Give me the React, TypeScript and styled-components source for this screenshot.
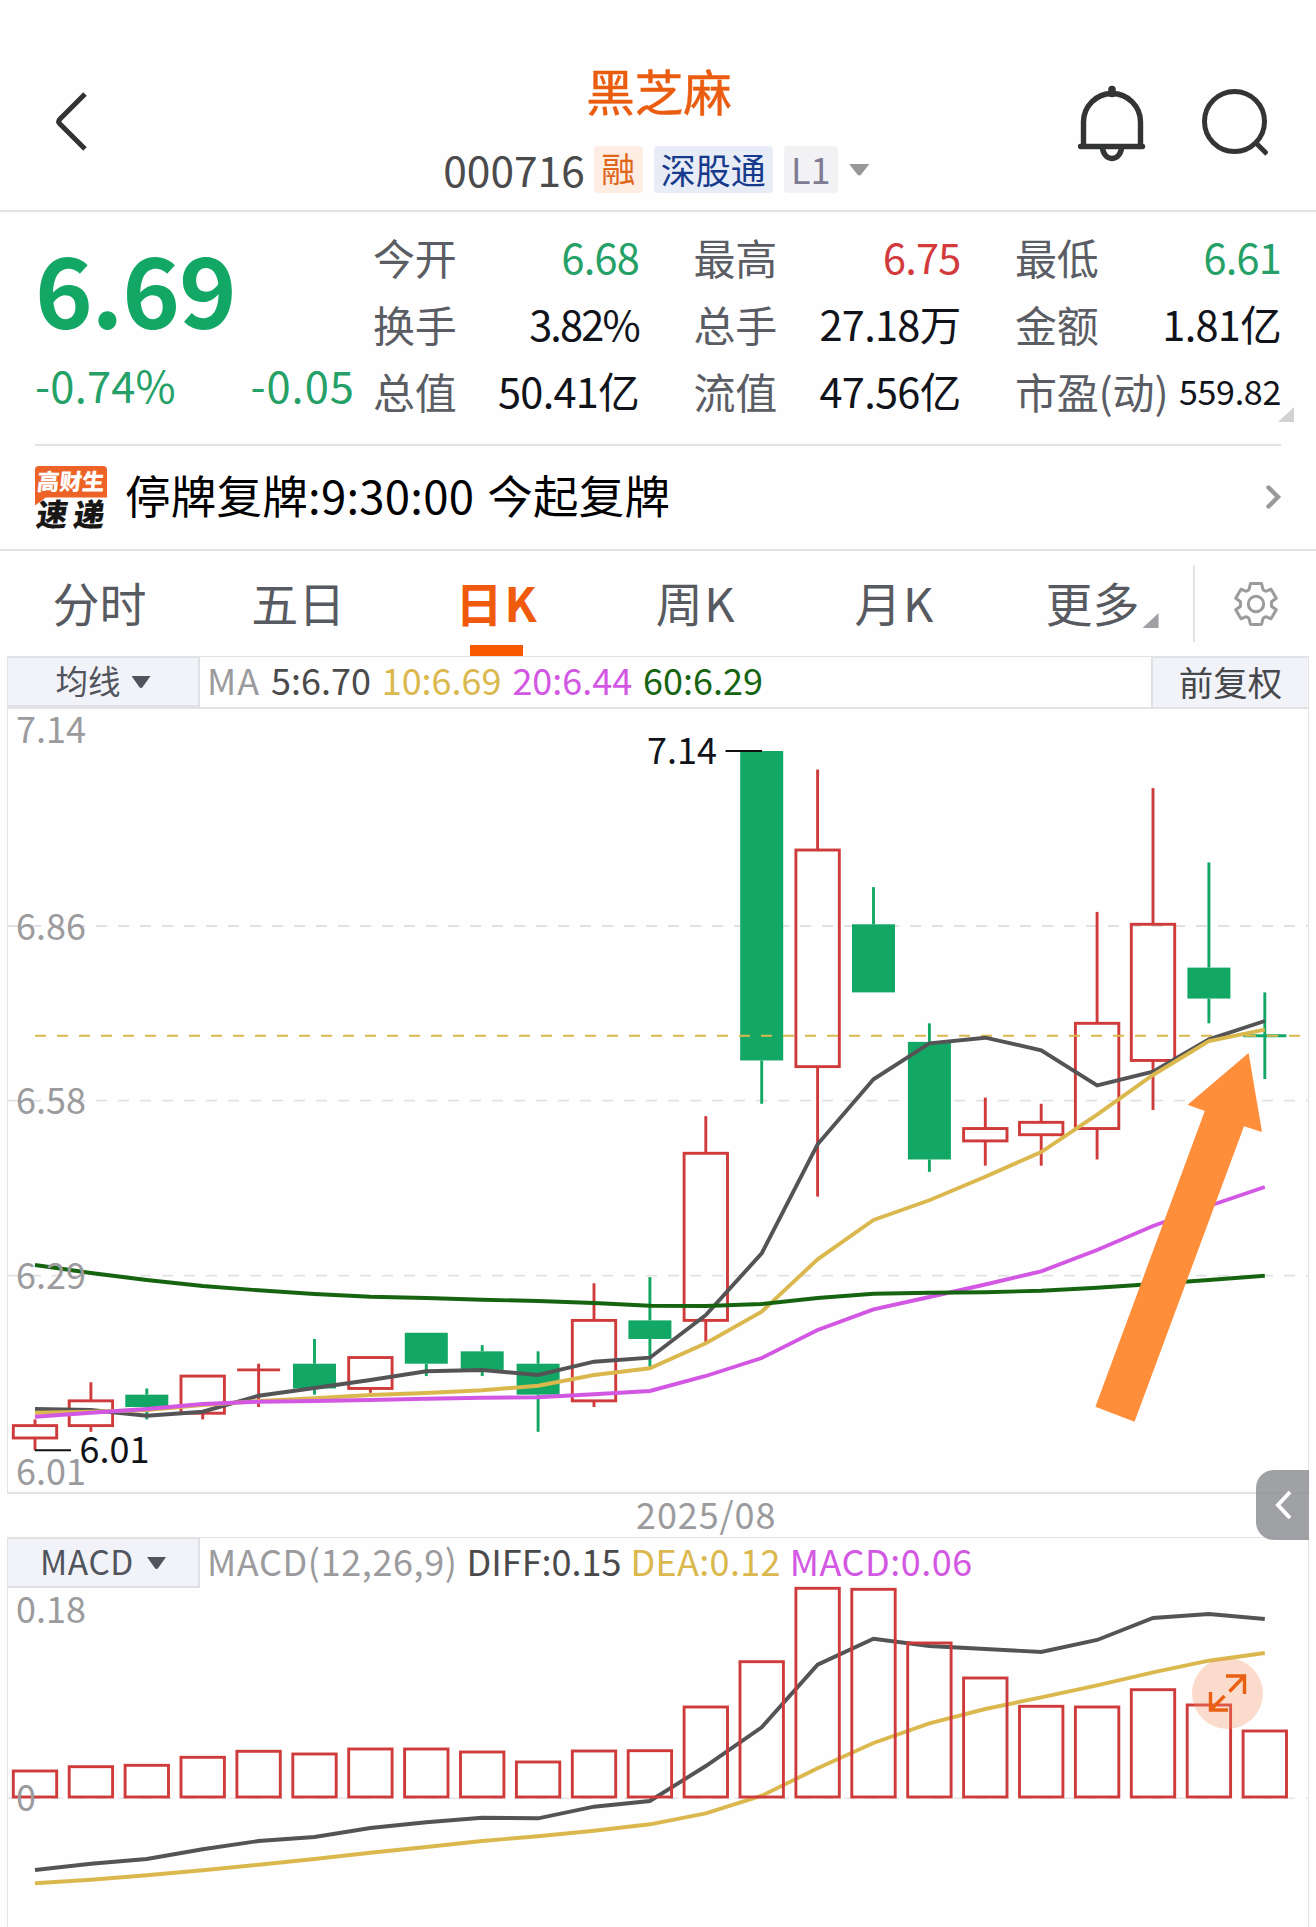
import React from "react";
import styled, { createGlobalStyle } from "styled-components";

const UP = "#cf3a3a";
const DOWN = "#12a765";
const GOLD = "#dbb84e";
const DARK = "#545456";
const PINK = "#d257e2";
const FOREST = "#166410";
const LINE = "#e3e3e5";
const MUTED = "#9b9b9d";
const LABEL = "#5b5d64";

const Global = createGlobalStyle`
  * { box-sizing: border-box; }
  body { margin: 0; background: #fefefe; }
  svg { display: block; }
`;

const Screen = styled.main`
  width: 1316px;
  height: 1927px;
  overflow: hidden;
  background: #fefefe;
  color: #111318;
  font-family: "Noto Sans CJK SC", "Noto Sans", sans-serif;
  font-size: 42px;
  white-space: nowrap;
`;

const Txt = styled.span<{ $size?: number; $color?: string; $track?: number }>`
  font-size: ${(p) => p.$size ?? 42}px;
  color: ${(p) => p.$color ?? "#10131a"};
  letter-spacing: ${(p) => p.$track ?? 0}px;
  line-height: 1;
`;

const Header = styled.header`
  height: 212px;
  border-bottom: 2px solid ${LINE};
  display: grid;
  grid-template-columns: 1fr auto 1fr;
  padding: 60px 48px 0 52px;
`;

const BackButton = styled.div`
  padding-top: 29px;
`;

const TitleBlock = styled.div`
  display: flex;
  flex-direction: column;
  align-items: center;
  padding-right: 7px;
`;

const Title = styled.h1`
  margin: 0 0 26px 5px;
  font-size: 48.5px;
  line-height: 60px;
  font-weight: 400;
  -webkit-text-stroke: 0.5px #ea5d10;
  color: #ea5d10;
`;

const CodeRow = styled.div`
  display: flex;
  align-items: center;
  height: 47px;
`;

const Tag = styled.span<{ $w: number; $bg: string; $fg: string; $size: number; $gap: number }>`
  width: ${(p) => p.$w}px;
  height: 47px;
  margin-left: ${(p) => p.$gap}px;
  padding-bottom: 3px;
  border-radius: 4px;
  display: flex;
  align-items: center;
  justify-content: center;
  background: ${(p) => p.$bg};
  color: ${(p) => p.$fg};
  font-size: ${(p) => p.$size}px;
  line-height: 1;
`;

const Actions = styled.div`
  display: flex;
  justify-content: flex-end;
  gap: 56px;
  padding-top: 24px;
`;

const Caret = styled.i<{ $w: number; $h: number; $color: string; $gap: number }>`
  width: ${(p) => p.$w}px;
  height: ${(p) => p.$h}px;
  margin-left: ${(p) => p.$gap}px;
  background: ${(p) => p.$color};
  clip-path: polygon(0 0, 100% 0, 57% 95%, 50% 100%, 43% 95%);
`;

const Corner = styled.i<{ $color: string }>`
  width: 16px;
  height: 15px;
  background: ${(p) => p.$color};
  clip-path: polygon(100% 0, 100% 100%, 0 100%);
`;

const Quote = styled.section`
  height: 234px;
  margin: 0 35px;
  border-bottom: 2px solid ${LINE};
  display: flex;
  position: relative;
`;

const PriceBlock = styled.div`
  width: 338px;
  padding: 24px 18px 0 0;
`;

const Price = styled.div`
  font-size: 98px;
  line-height: 100px;
  font-weight: 700;
  letter-spacing: -1.2px;
  color: ${DOWN};
`;

const ChangeRow = styled.div`
  display: flex;
  justify-content: space-between;
  margin-top: 27px;
  line-height: 50px;
`;

const StatGrid = styled.div`
  display: grid;
  grid-template-columns: 266px 267px 266px;
  column-gap: 54.5px;
  grid-template-rows: repeat(3, 67px);
  padding-top: 11px;
`;

const Stat = styled.div`
  display: flex;
  align-items: center;
  justify-content: space-between;
`;

const MoreStats = styled.div`
  position: absolute;
  right: -13px;
  bottom: 22px;
  line-height: 0;
  display: flex;
`;

const News = styled.section`
  height: 105px;
  border-bottom: 2px solid ${LINE};
  padding: 0 34px 0 35px;
  display: flex;
  align-items: center;

  > svg { margin-bottom: 2px; }
`;

const NewsText = styled.div`
  flex: 1;
  margin-left: 18px;
  padding-bottom: 8px;
  font-size: 45.5px;
  line-height: 50px;
  letter-spacing: 0.25px;
  word-spacing: 2.5px;
  color: #000;
`;

const Logo = styled.div`
  width: 72px;
  height: 64px;
  font-weight: 900;
`;

const LogoTop = styled.div`
  height: 40px;
  background: #ec6227;
  border-radius: 4px 4px 0 0;
  clip-path: polygon(0 0, 100% 0, 100% 80%, 15% 80%, 0 100%);
  color: #fff;
  font-size: 22.5px;
  line-height: 29px;
  text-align: center;

  span { display: block; transform: skewX(-6deg); }
`;

const LogoBottom = styled.div`
  margin-top: -9px;
  padding-left: 2px;
  color: #191716;
  font-size: 31px;
  letter-spacing: 6px;
  line-height: 32px;
  transform: skewX(-8deg);
`;

const Tabs = styled.nav`
  height: 105px;
  display: flex;
  align-items: center;
`;

const TabList = styled.div`
  width: 1193px;
  height: 105px;
  display: grid;
  grid-template-columns: repeat(6, 1fr);
`;

const Tab = styled.div<{ $active?: boolean; $track?: number }>`
  height: 105px;
  padding-top: 21px;
  display: flex;
  flex-direction: column;
  align-items: center;
  justify-content: space-between;
  font-size: 47px;
  line-height: 60px;
  letter-spacing: ${(p) => p.$track ?? 0}px;
  font-weight: ${(p) => (p.$active ? 700 : 400)};
  color: ${(p) => (p.$active ? "#f05a0c" : "#585a61")};
`;

const TabLine = styled.i`
  width: 53px;
  height: 11px;
  margin-right: 1px;
  background: #fb5900;
`;

const TabMore = styled.div`
  display: flex;
  align-items: flex-end;
  gap: 3px;
  margin-right: -17px;

  i { margin-bottom: 4px; }
`;

const Settings = styled.div`
  height: 77px;
  border-left: 2px solid ${LINE};
  padding: 15px 0 0 38px;
`;

const IndicatorBar = styled.div<{ $lined?: boolean }>`
  height: ${(p) => (p.$lined ? 53 : 51)}px;
  margin: 0 7px;
  display: flex;
  border: solid ${LINE};
  border-width: ${(p) => (p.$lined ? "1px 1px 2px 1px" : "1px 1px 0 1px")};
`;

const Picker = styled.div<{ $w: number; $side?: "left" | "right" }>`
  width: ${(p) => p.$w}px;
  flex: none;
  padding-bottom: 3px;
  display: flex;
  align-items: center;
  justify-content: center;
  background: #f2f3f8;
  border: solid #dfe0e3;
  border-width: ${(p) => (p.$side === "right" ? "1px 0 0 2px" : "1px 2px 2px 0")};

  i { margin-top: 4px; }
`;

const Legend = styled.div<{ $gap: number }>`
  flex: 1;
  padding: 0 0 7px 7px;
  display: flex;
  align-items: center;
  gap: ${(p) => p.$gap}px;
`;

const ChartFrame = styled.div<{ $h: number; $bottom?: boolean }>`
  position: relative;
  height: ${(p) => p.$h}px;
  margin: 0 7px;
  border: solid ${LINE};
  border-width: ${(p) => (p.$bottom ? "0 1px 2px 1px" : "0 1px 0 1px")};

  > svg { overflow: visible; }
`;

const DateStrip = styled.div`
  height: 43px;
  padding: 0 0 6px 636px;
  display: flex;
  align-items: center;
`;

const SideHandle = styled.div`
  position: absolute;
  right: -1px;
  bottom: -48px;
  width: 53px;
  height: 70px;
  border-radius: 18px 0 0 18px;
  background: rgba(138, 140, 145, 0.82);
  padding: 20px 0 0 18px;
`;

const ExpandButton = styled.div`
  position: absolute;
  left: 1184px;
  top: 70px;
  width: 71px;
  height: 71px;
  border-radius: 50%;
  background: rgba(246, 150, 100, 0.33);
`;

/* open, close, high, low */
type Candle = [number, number, number, number];

const candles: Candle[] = [
  [6.03, 6.05, 6.06, 6.01],
  [6.05, 6.09, 6.12, 6.04],
  [6.1, 6.08, 6.11, 6.06],
  [6.07, 6.13, 6.13, 6.06],
  [6.14, 6.14, 6.15, 6.08],
  [6.15, 6.11, 6.19, 6.1],
  [6.11, 6.16, 6.16, 6.103],
  [6.2, 6.15, 6.2, 6.13],
  [6.17, 6.14, 6.18, 6.13],
  [6.15, 6.1, 6.17, 6.04],
  [6.09, 6.22, 6.28, 6.08],
  [6.22, 6.19, 6.29, 6.145],
  [6.22, 6.49, 6.55, 6.185],
  [7.14, 6.64, 7.14, 6.57],
  [6.63, 6.98, 7.11, 6.42],
  [6.86, 6.75, 6.92, 6.75],
  [6.67, 6.48, 6.7, 6.46],
  [6.51, 6.53, 6.58, 6.47],
  [6.52, 6.54, 6.57, 6.47],
  [6.53, 6.7, 6.88, 6.48],
  [6.64, 6.86, 7.08, 6.56],
  [6.79, 6.74, 6.96, 6.7],
  [6.681, 6.68, 6.75, 6.61],
];

const ma5 = [1409, 1410, 1415.7, 1411.7, 1395.7, 1388, 1380, 1371.3, 1370, 1375, 1361.7, 1357.7, 1315, 1253.3, 1144.3, 1079.3, 1043.3, 1037.7, 1050.3, 1085.3, 1071.7, 1039.3, 1021];
const ma10 = [1412.7, 1411.7, 1410, 1405, 1401, 1398.3, 1395, 1393, 1390.3, 1385.7, 1375, 1368.3, 1343.3, 1311.7, 1259.3, 1220, 1200.3, 1176.7, 1152, 1114.6, 1075, 1041, 1029.7];
const ma20 = [1416.7, 1412.7, 1409, 1404, 1401.7, 1401, 1400, 1398.7, 1397.7, 1397.3, 1394.3, 1391, 1376, 1358, 1330, 1309.3, 1297, 1284.5, 1271.3, 1250, 1226, 1206, 1187];
const ma60 = [1265, 1273, 1280, 1286, 1290.3, 1294, 1296.7, 1298, 1299.7, 1301, 1303, 1305.8, 1306, 1304, 1298, 1293.7, 1292.7, 1292.3, 1290.7, 1287.7, 1284, 1280, 1275.7];

const macdTop = [1771, 1766.7, 1765.3, 1757.3, 1751.3, 1754, 1749, 1749, 1752, 1762, 1751, 1750.7, 1707, 1661.7, 1588.3, 1589.3, 1643, 1678, 1706.3, 1707, 1689.7, 1705, 1731];
const diff = [1870, 1863.7, 1859, 1849.3, 1841, 1837, 1828, 1822.3, 1817.7, 1818.3, 1806.7, 1801, 1766, 1727.3, 1664.7, 1638.7, 1646, 1649, 1652, 1640, 1618, 1614, 1619];
const dea = [1883.3, 1879.7, 1875.3, 1870.3, 1864.7, 1859, 1852.7, 1847, 1841, 1836.3, 1830.7, 1824.3, 1813.3, 1795.7, 1768.3, 1743, 1723.3, 1709, 1697.3, 1685.3, 1672.3, 1660.7, 1653];

const px = (i: number) => 35 + i * 55.9;
const py = (price: number) => 751 + (7.14 - price) * 618.9;

const Trend = ({ ys, color }: { ys: number[]; color: string }) => (
  <polyline points={ys.map((y, i) => `${px(i)},${y}`).join(" ")} fill="none" stroke={color} strokeWidth={3.9} />
);

const AxisText = styled.text<{ $dark?: boolean }>`
  font-size: 36px;
  fill: ${(p) => (p.$dark ? "#10131a" : "#9b9b9d")};
`;

const CandleMark = ({ c, i }: { c: Candle; i: number }) => {
  const [open, close, high, low] = c;
  const x = px(i);
  const top = py(Math.max(open, close));
  const bottom = py(Math.min(open, close));
  const up = close >= open;
  const color = up ? UP : DOWN;
  return (
    <g stroke={color} strokeWidth={2.9}>
      <line x1={x} x2={x} y1={py(high)} y2={top} />
      <line x1={x} x2={x} y1={bottom} y2={py(low)} />
      {bottom - top < 2 ? (
        <line x1={x - 21.5} x2={x + 21.5} y1={bottom} y2={bottom} />
      ) : up ? (
        <rect x={x - 21.7} y={top} width={43.4} height={bottom - top} fill="none" />
      ) : (
        <rect x={x - 21.5} y={top} width={43} height={bottom - top} fill={color} stroke="none" />
      )}
    </g>
  );
};

const KChart = () => (
  <svg width={1300} height={783} viewBox="8 709 1300 783">
    {[926, 1100.7, 1275.7].map((y) => (
      <line key={y} x1={8} x2={1308} y1={y} y2={y} stroke="#e1e1e3" strokeWidth={1.8} strokeDasharray="11 11" />
    ))}
    {candles.map((c, i) => (
      <CandleMark key={i} c={c} i={i} />
    ))}
    <line x1={35} x2={1300} y1={1035.7} y2={1035.7} stroke={GOLD} strokeWidth={2} strokeDasharray="11 11" />
    <Trend ys={ma5} color={DARK} />
    <Trend ys={ma10} color={GOLD} />
    <Trend ys={ma20} color={PINK} />
    <Trend ys={ma60} color={FOREST} />
    <line x1={725.5} x2={762} y1={751} y2={751} stroke="#111" strokeWidth={2} />
    <line x1={35} x2={71} y1={1450.3} y2={1450.3} stroke="#111" strokeWidth={2} />
    <AxisText x={16} y={742.5}>7.14</AxisText>
    <AxisText x={16} y={939.5}>6.86</AxisText>
    <AxisText x={16} y={1114}>6.58</AxisText>
    <AxisText x={16} y={1289}>6.29</AxisText>
    <AxisText x={16} y={1485}>6.01</AxisText>
    <AxisText $dark x={647} y={763.5}>7.14</AxisText>
    <AxisText $dark x={79.5} y={1463}>6.01</AxisText>
    <path d="M1248.6 1053 L1262 1132 L1244 1126.3 L1134.5 1421.7 L1095.4 1406.7 L1204.8 1111 L1187.6 1104.7 Z" fill="#ff8e3a" />
  </svg>
);

const MacdChart = () => (
  <svg width={1300} height={339} viewBox="8 1588 1300 339">
    <line x1={8} x2={1308} y1={1798.3} y2={1798.3} stroke="#e6e6e8" strokeWidth={1.5} strokeDasharray="11 11" />
    <Trend ys={diff} color={DARK} />
    <Trend ys={dea} color={GOLD} />
    {macdTop.map((y, i) => (
      <rect key={i} x={px(i) - 21.7} y={y} width={43.4} height={1797 - y} fill="none" stroke={UP} strokeWidth={2.9} />
    ))}
    <AxisText x={16} y={1623}>0.18</AxisText>
    <AxisText x={16} y={1810.500}>0</AxisText>
  </svg>
);

const stats: [string, string, string, number, number][] = [
  ["今开", "6.68", "#25a168", 41.5, -0.8],
  ["最高", "6.75", "#d23a3c", 41.5, -0.8],
  ["最低", "6.61", "#25a168", 41.5, -0.8],
  ["换手", "3.82%", "#10131a", 41.5, -1.8],
  ["总手", "27.18万", "#10131a", 41.5, -0.7],
  ["金额", "1.81亿", "#10131a", 41.5, -0.7],
  ["总值", "50.41亿", "#10131a", 41.5, -0.7],
  ["流值", "47.56亿", "#10131a", 41.5, -0.7],
  ["市盈(动)", "559.82", "#10131a", 34, -0.3],
];

export default function App() {
  return (
    <Screen>
      <Global />
      <Header>
        <BackButton>
          <svg width={40} height={64} viewBox="0 0 40 64" fill="none" stroke="#333" strokeWidth={5}>
            <path d="M33 5 L8 30 Q5.500 32.500 8 35 L33 60" />
          </svg>
        </BackButton>
        <TitleBlock>
          <Title>黑芝麻</Title>
          <CodeRow>
            <Txt $size={42.5} $color="#4b4b4d">000716</Txt>
            <Tag $w={49} $gap={9} $bg="#fdede3" $fg="#e0661c" $size={34}>融</Tag>
            <Tag $w={119} $gap={11} $bg="#e7ecf6" $fg="#173a8c" $size={35}>深股通</Tag>
            <Tag $w={54} $gap={11} $bg="#f2f2f5" $fg="#7f7a94" $size={36}>L1</Tag>
            <Caret $w={21} $h={12} $gap={11} $color="#98989a" />
          </CodeRow>
        </TitleBlock>
        <Actions>
          <svg width={68} height={80} viewBox="0 0 68 80" fill="none" stroke="#333436" strokeWidth={5.4}>
            <path d="M5.500 62 V38 A28.500 28.500 0 0 1 62.500 38 V62" />
            <path d="M2.500 62.500 H64.500" strokeLinecap="round" />
            <path d="M34 5.500 V9.500" strokeWidth={7.500} strokeLinecap="round" />
            <path d="M24.500 63 A9.500 11.500 0 0 0 43.500 63" />
          </svg>
          <svg width={66} height={80} viewBox="2 0 66 80" fill="none" stroke="#333436" strokeWidth={5}>
            <circle cx={34.500} cy={37.500} r={30} />
            <path d="M55 58 L67 70" />
          </svg>
        </Actions>
      </Header>

      <Quote>
        <PriceBlock>
          <Price>6.69</Price>
          <ChangeRow>
            <Txt $size={43.5} $color="#25a168" $track={0.2}>-0.74%</Txt>
            <Txt $size={43.5} $color="#25a168" $track={1}>-0.05</Txt>
          </ChangeRow>
        </PriceBlock>
        <StatGrid>
          {stats.map(([name, value, color, size, track]) => (
            <Stat key={name}>
              <Txt $size={42} $color={LABEL} $track={-0.2}>{name}</Txt>
              <Txt $size={size} $color={color} $track={track}>{value}</Txt>
            </Stat>
          ))}
        </StatGrid>
        <MoreStats>
          <Corner $color="#d2d2d4" />
        </MoreStats>
      </Quote>

      <News>
        <Logo>
          <LogoTop>
            <span>高财生</span>
          </LogoTop>
          <LogoBottom>速递</LogoBottom>
        </Logo>
        <NewsText>停牌复牌:9:30:00 今起复牌</NewsText>
        <svg width={18} height={26} viewBox="0 0 18 26" fill="none" stroke="#99999b" strokeWidth={4.4} strokeLinecap="round">
          <path d="M4.500 3.500 L14 13 L4.500 22.500" />
        </svg>
      </News>

      <Tabs>
        <TabList>
          <Tab>分时</Tab>
          <Tab>五日</Tab>
          <Tab $track={2} $active>
            日K
            <TabLine />
          </Tab>
          <Tab $track={1.5}>周K</Tab>
          <Tab $track={1.5}>月K</Tab>
          <Tab>
            <TabMore>
              更多
              <Corner $color="#a0a1a5" />
            </TabMore>
          </Tab>
        </TabList>
        <Settings>
          <svg width={46} height={48} viewBox="-23 -24 46 48" fill="none" stroke="#9b9b9d" strokeWidth={3} strokeLinejoin="round">
            <path d="M-5.500 -20.500 H5.500 L7 -14.500 Q8.500 -12.800 10.500 -12.800 L15 -14.800 L20.300 -5.800 L15.500 -2.200 V2.200 L20.300 5.800 L15 14.800 L10.500 12.800 Q8.500 12.800 7 14.500 L5.500 20.500 H-5.500 L-7 14.500 Q-8.500 12.800 -10.500 12.800 L-15 14.800 L-20.300 5.800 L-15.500 2.200 V-2.200 L-20.300 -5.800 L-15 -14.800 L-10.500 -12.800 Q-8.500 -12.800 -7 -14.500 Z" />
            <circle r={7.700} />
          </svg>
        </Settings>
      </Tabs>

      <IndicatorBar $lined>
        <Picker $w={192}>
          <Txt $size={32.5} $color="#51545d">均线</Txt>
          <Caret $w={19} $h={12} $gap={11} $color="#51545d" />
        </Picker>
        <Legend $gap={10.8}>
          <Txt $size={36} $color={MUTED} $track={1}>MA</Txt>
          <Txt $size={36} $color="#4a4a4c">5:6.70</Txt>
          <Txt $size={36} $color={GOLD}>10:6.69</Txt>
          <Txt $size={36} $color={PINK}>20:6.44</Txt>
          <Txt $size={36} $color={FOREST}>60:6.29</Txt>
        </Legend>
        <Picker $w={157} $side="right">
          <Txt $size={34.5} $color="#47484c">前复权</Txt>
        </Picker>
      </IndicatorBar>
      <ChartFrame $h={785} $bottom>
        <KChart />
        <SideHandle>
          <svg width={20} height={30} viewBox="0 0 20 30" fill="none" stroke="#fff" strokeWidth={4}>
            <path d="M16 2 L4 15 L16 28" />
          </svg>
        </SideHandle>
      </ChartFrame>

      <DateStrip>
        <Txt $size={36} $color={MUTED} $track={0.9}>2025/08</Txt>
      </DateStrip>

      <IndicatorBar>
        <Picker $w={192}>
          <Txt $size={33.5} $color="#51545d" $track={0.6}>MACD</Txt>
          <Caret $w={19} $h={12} $gap={13} $color="#51545d" />
        </Picker>
        <Legend $gap={9}>
          <Txt $size={36} $color={MUTED} $track={0.6}>MACD(12,26,9)</Txt>
          <Txt $size={36} $color="#4a4a4c">DIFF:0.15</Txt>
          <Txt $size={36} $color={GOLD} $track={0.3}>DEA:0.12</Txt>
          <Txt $size={36} $color={PINK} $track={0.5}>MACD:0.06</Txt>
        </Legend>
      </IndicatorBar>
      <ChartFrame $h={339}>
        <MacdChart />
        <ExpandButton>
          <svg width={71} height={71} viewBox="0 0 71 71" fill="none" stroke="#ea6012" strokeWidth={3.4}>
            <path d="M34 18 H52.500 V36 M52 18.500 L37.500 33.500" />
            <path d="M18.500 34 V52 H36 M19 51.500 L32.500 38" />
          </svg>
        </ExpandButton>
      </ChartFrame>
    </Screen>
  );
}
